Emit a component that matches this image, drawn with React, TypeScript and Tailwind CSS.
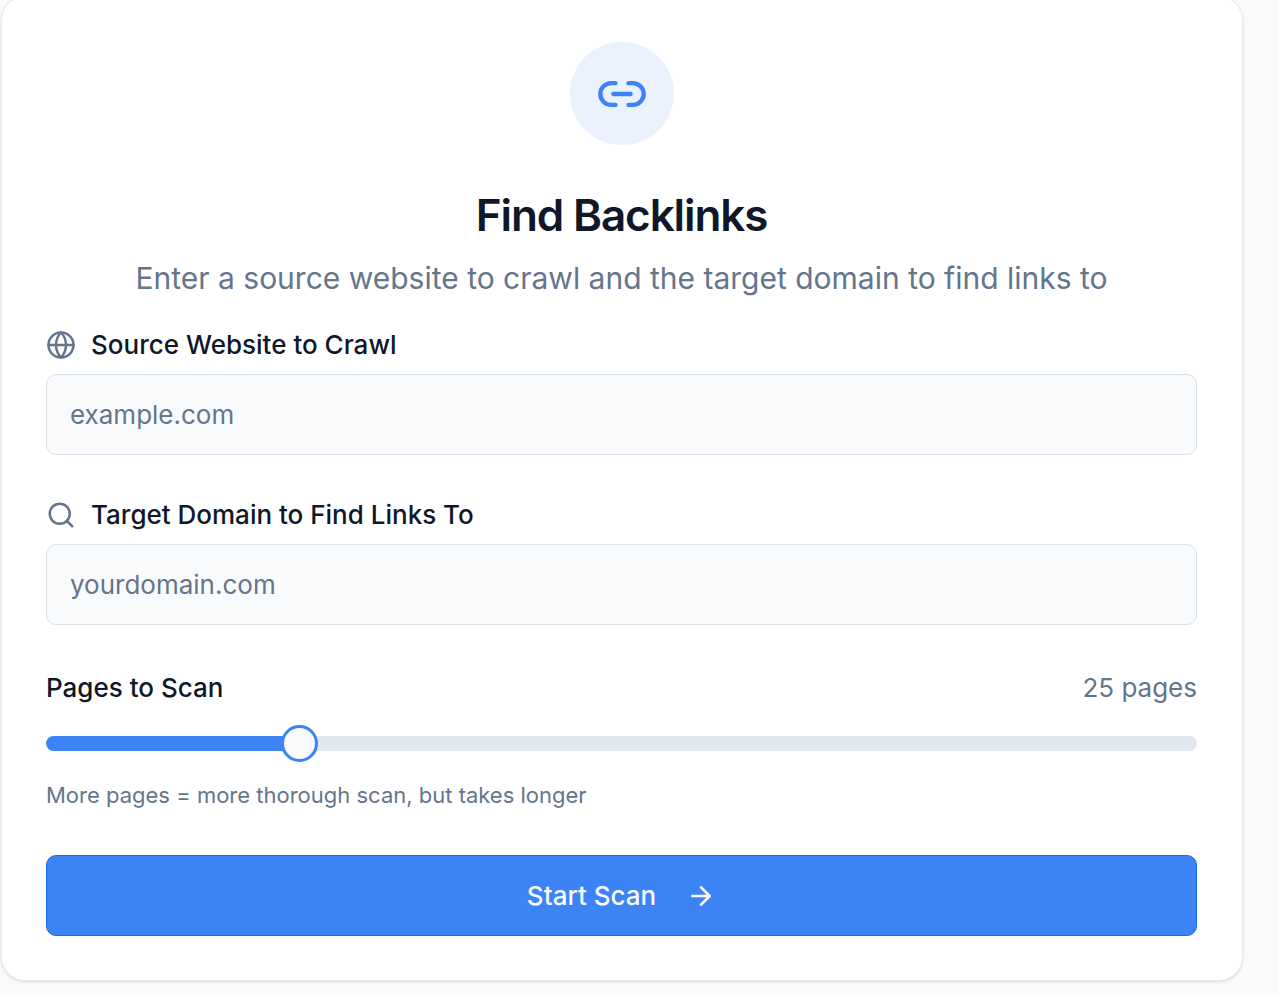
import React, { useState } from 'react';
import { ArrowRight, Globe, Link2, Search } from 'lucide-react';

const MIN_PAGES = 5;
const MAX_PAGES = 100;

const labelClass = 'flex items-center gap-[15px] text-[26px] leading-10 font-medium';

const inputClass =
  'mt-[9px] w-full h-[81px] rounded-[10px] border border-[#d9e1ea] bg-[#f9fafc] px-[23px] text-[26px] text-[#0f1729] placeholder:text-[#65758b] focus:outline-none focus:border-[#3c83f6]';

const App: React.FC = () => {
  const [source, setSource] = useState('');
  const [target, setTarget] = useState('');
  const [pages, setPages] = useState(25);

  const percent = ((pages - MIN_PAGES) / (MAX_PAGES - MIN_PAGES)) * 100;

  return (
    <div className="min-h-screen bg-[#f9fafc] pl-px pr-9 pb-3 font-['Inter',sans-serif] text-[#0f1729]">
      <main className="-mt-1 rounded-3xl border border-[#e9ebf0] bg-white pl-11 pr-[45px] pt-[45px] pb-11 shadow-sm">
        <header className="flex flex-col items-center text-center">
          <div className="flex h-[103px] w-[104px] items-center justify-center rounded-full bg-[#ebf2fe]">
            <Link2 size={52} className="text-[#3c83f6]" />
          </div>
          <h1 className="mt-[43px] text-[44px] leading-[54px] font-semibold tracking-tight">Find Backlinks</h1>
          <p className="mt-3.5 text-[30px] leading-11 text-[#65758b]">
            Enter a source website to crawl and the target domain to find links to
          </p>
        </header>

        <form className="mt-[25px]" onSubmit={(e) => e.preventDefault()}>
          <label htmlFor="source" className={labelClass}>
            <Globe size={30} className="text-[#65758b]" />
            Source Website to Crawl
          </label>
          <input
            id="source"
            type="text"
            placeholder="example.com"
            className={inputClass}
            value={source}
            onChange={(e) => setSource(e.target.value)}
          />

          <label htmlFor="target" className={`mt-10 ${labelClass}`}>
            <Search size={30} className="text-[#65758b]" />
            Target Domain to Find Links To
          </label>
          <input
            id="target"
            type="text"
            placeholder="yourdomain.com"
            className={inputClass}
            value={target}
            onChange={(e) => setTarget(e.target.value)}
          />

          <div className="mt-[43px] flex items-center justify-between text-[26px] leading-10">
            <label htmlFor="pages" className="font-medium">Pages to Scan</label>
            <span className="text-[#65758b]">{pages} pages</span>
          </div>
          <input
            id="pages"
            type="range"
            min={MIN_PAGES}
            max={MAX_PAGES}
            step={5}
            value={pages}
            onChange={(e) => setPages(Number(e.target.value))}
            className="mt-[17px] block h-[37px] w-full cursor-pointer appearance-none bg-transparent [&::-webkit-slider-runnable-track]:h-[15px] [&::-webkit-slider-runnable-track]:rounded-full [&::-webkit-slider-runnable-track]:bg-[image:var(--track)] [&::-webkit-slider-thumb]:-mt-[11px] [&::-webkit-slider-thumb]:size-[37px] [&::-webkit-slider-thumb]:appearance-none [&::-webkit-slider-thumb]:rounded-full [&::-webkit-slider-thumb]:border-3 [&::-webkit-slider-thumb]:border-solid [&::-webkit-slider-thumb]:border-[#3c83f6] [&::-webkit-slider-thumb]:bg-[#f9fafc]"
            style={{ '--track': `linear-gradient(to right, #3c83f6 ${percent}%, #e1e7ef ${percent}%)` } as React.CSSProperties}
          />
          <p className="mt-[15px] text-[22px] leading-9 text-[#65758b]">More pages = more thorough scan, but takes longer</p>

          <button
            type="submit"
            className="mt-[42px] flex h-[81px] w-full items-center justify-center gap-[30px] rounded-[10px] border border-[#1769f0] bg-[#3c83f6] text-[26px] font-medium text-[#f9fafc]"
          >
            Start Scan
            <ArrowRight size={30} />
          </button>
        </form>
      </main>
    </div>
  );
};

export default App;
